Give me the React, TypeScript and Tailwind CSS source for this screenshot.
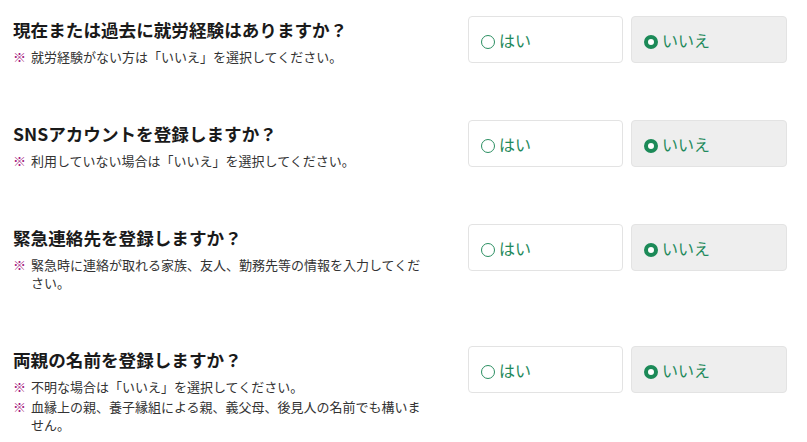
import React from "react";

type Question = {
  title: string;
  notes: string[];
};

const questions: Question[] = [
  {
    title: "現在または過去に就労経験はありますか？",
    notes: ["就労経験がない方は「いいえ」を選択してください。"],
  },
  {
    title: "SNSアカウントを登録しますか？",
    notes: ["利用していない場合は「いいえ」を選択してください。"],
  },
  {
    title: "緊急連絡先を登録しますか？",
    notes: ["緊急時に連絡が取れる家族、友人、勤務先等の情報を入力してください。"],
  },
  {
    title: "両親の名前を登録しますか？",
    notes: [
      "不明な場合は「いいえ」を選択してください。",
      "血縁上の親、養子縁組による親、義父母、後見人の名前でも構いません。",
    ],
  },
];

function Radio({ checked }: { checked: boolean }) {
  return checked ? (
    <span className="mt-[5px] box-border block h-[14px] w-[14px] shrink-0 rounded-full border-[4px] border-[#1c8a58] bg-white" />
  ) : (
    <span className="mt-[5px] box-border block h-[14px] w-[14px] shrink-0 rounded-full border-[1.5px] border-[#2b8f62] bg-white" />
  );
}

function Choice({ label, checked }: { label: string; checked: boolean }) {
  return (
    <label
      className={
        checked
          ? "flex h-[47px] w-[156px] items-center gap-[4px] rounded-[4px] border border-[#e3e3e3] bg-[#eeeeee] pl-[12px]"
          : "flex h-[47px] w-[155px] items-center gap-[4px] rounded-[4px] border border-[#e3e3e3] bg-white pl-[12px]"
      }
    >
      <Radio checked={checked} />
      <span className="text-[16px] leading-[20px] text-[#1f8a5c]">{label}</span>
    </label>
  );
}

export default function App() {
  return (
    <main
      className="flex min-h-[442px] w-full flex-col gap-[54px] bg-white pl-[13px] pr-[20px] pt-[16px]"
      style={{ fontFamily: '"Noto Sans CJK JP", "Noto Sans", sans-serif' }}
    >
      {questions.map((q) => (
        <section key={q.title} className="flex items-start justify-between">
          <div className="w-[420px] pt-[2px]">
            <h2 className="text-[17.6px] font-bold leading-[24px] text-[#1a1a1a]">{q.title}</h2>
            <ul className="mt-[6px] flex flex-col gap-[2px]">
              {q.notes.map((note) => (
                <li key={note} className="flex text-[13px] leading-[18px] text-[#333333]">
                  <span className="w-[18px] shrink-0 text-[#a3197c]">※</span>
                  <span className="w-[396px]">{note}</span>
                </li>
              ))}
            </ul>
          </div>
          <div className="flex gap-[8px]">
            <Choice label="はい" checked={false} />
            <Choice label="いいえ" checked={true} />
          </div>
        </section>
      ))}
    </main>
  );
}
